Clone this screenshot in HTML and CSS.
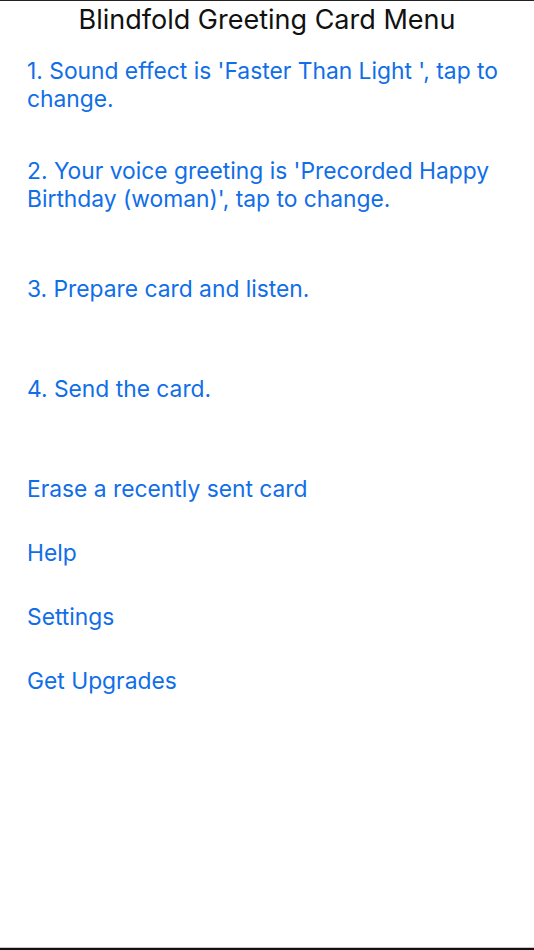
FILE: index.html
```html
<!DOCTYPE html>
<html>
<head>
<meta charset="utf-8">
<link rel="stylesheet" href="styles.css">
</head>
<body>
<div class="screen">
  <div class="title">Blindfold Greeting Card Menu</div>
  <div class="menu">
    <div class="item gap-a">1. Sound effect is 'Faster Than Light ', tap to change.</div>
    <div class="item gap-b">2. Your voice greeting is 'Precorded Happy Birthday (woman)', tap to change.</div>
    <div class="item gap-c">3. Prepare card and listen.</div>
    <div class="item gap-d">4. Send the card.</div>
    <div class="item gap-d">Erase a recently sent card</div>
    <div class="item gap-e">Help</div>
    <div class="item gap-e">Settings</div>
    <div class="item gap-e">Get Upgrades</div>
  </div>
</div>
</body>
</html>
```

FILE: styles.css
```css
html, body {
  margin: 0;
  padding: 0;
  background: #ffffff;
}
.screen {
  width: 534px;
  height: 950px;
  box-sizing: border-box;
  border-top: 1px solid #222;
  border-bottom: 2px solid #111;
  position: relative;
  font-family: Inter, "Noto Sans", sans-serif;
  display: flex;
  flex-direction: column;
}
.screen::after {
  content: "";
  position: absolute;
  left: 0;
  right: 0;
  bottom: 0;
  height: 1px;
  background: #c8c8c8;
}
.title {
  height: 37px;
  line-height: 37px;
  text-align: center;
  font-size: 27px;
  color: #111;
}
.menu {
  display: flex;
  flex-direction: column;
  padding: 0 27px;
}
.item {
  color: #0f6ee8;
  font-size: 22.8px;
  line-height: 28px;
}
.gap-a { margin-top: 19px; }
.gap-b { margin-top: 44px; }
.gap-c { margin-top: 62px; }
.gap-d { margin-top: 72px; }
.gap-e { margin-top: 36px; }
```
